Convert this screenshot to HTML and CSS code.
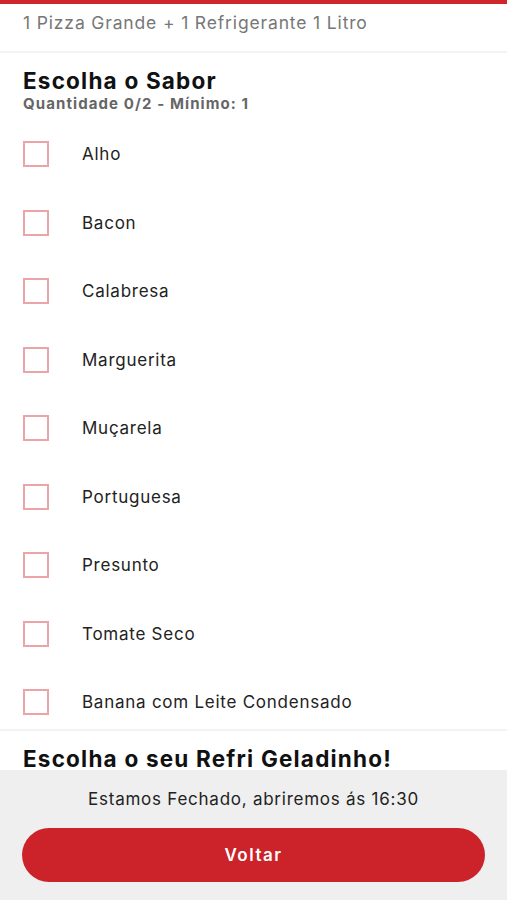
FILE: index.html
```html
<!DOCTYPE html>
<html lang="pt-BR">
<head>
    <meta charset="UTF-8" />
    <meta name="viewport" content="width=device-width, initial-scale=1" />
    <title>Escolha o Sabor</title>
    <link rel="stylesheet" href="styles.css">
</head>
<body>
    <div class="top-bar"></div>

    <p class="product-desc">1 Pizza Grande + 1 Refrigerante 1 Litro</p>

    <section class="group">
        <h2 class="group-title">Escolha o Sabor</h2>
        <p class="group-info">Quantidade 0/2 - Mínimo: 1</p>

        <ul class="options">
            <li class="option"><span class="check"></span>Alho</li>
            <li class="option"><span class="check"></span>Bacon</li>
            <li class="option"><span class="check"></span>Calabresa</li>
            <li class="option"><span class="check"></span>Marguerita</li>
            <li class="option"><span class="check"></span>Muçarela</li>
            <li class="option"><span class="check"></span>Portuguesa</li>
            <li class="option"><span class="check"></span>Presunto</li>
            <li class="option"><span class="check"></span>Tomate Seco</li>
            <li class="option"><span class="check"></span>Banana com Leite Condensado</li>
        </ul>
    </section>

    <section class="group">
        <h2 class="group-title">Escolha o seu Refri Geladinho!</h2>
    </section>

    <footer class="bottom">
        <p class="closed-msg">Estamos Fechado, abriremos ás 16:30</p>
        <button class="back-btn" type="button">Voltar</button>
    </footer>
</body>
</html>
```

FILE: styles.css
```css
body {
    font-family: Inter, "Noto Sans", sans-serif;
    background-color: #ffffff;
    color: #222;
    margin: 0;
    height: 900px;
    overflow: hidden;
}
.top-bar {
    height: 4px;
    background-color: #d0252b; /* brand red */
}
.product-desc {
    margin: 0;
    padding: 8px 23px 18px;
    font-size: 17.5px;
    line-height: 21px;
    letter-spacing: 0.85px;
    color: #777;
    border-bottom: 2px solid #f3f3f3;
}
.group {
    padding: 0 23px;
    border-bottom: 2px solid #f3f3f3;
}
.group-title {
    margin: 0;
    padding-top: 15px;
    font-size: 22.5px;
    line-height: 26px;
    font-weight: 700;
    letter-spacing: 1.2px;
    color: #111;
}
.group-info {
    margin: 0;
    font-size: 15px;
    line-height: 19px;
    font-weight: 700;
    color: #666;
    letter-spacing: 1.1px;
}
.options {
    list-style: none;
    margin: 0 0 -8px;
    padding: 7px 0 0;
}
.option {
    display: flex;
    align-items: center;
    height: 68.5px;
    font-size: 17px;
    letter-spacing: 0.75px;
    color: #222;
}
.check {
    width: 22px;
    height: 22px;
    border: 2px solid #eba5a9; /* faded red */
    margin-right: 33px;
    flex-shrink: 0;
}
.bottom {
    position: fixed;
    left: 0;
    right: 0;
    bottom: 0;
    height: 130px;
    background-color: #efefef;
    padding: 0 22px;
    box-sizing: border-box;
}
.closed-msg {
    margin: 0;
    padding: 19px 0 0;
    text-align: center;
    font-size: 17px;
    line-height: 21px;
    letter-spacing: 0.75px;
    color: #222;
}
.back-btn {
    display: block;
    width: 100%;
    height: 54px;
    margin-top: 18px;
    border: none;
    border-radius: 27px;
    background-color: #cc2229;
    color: #fff;
    font-family: inherit;
    font-size: 17px;
    font-weight: 600;
    letter-spacing: 1.5px;
}
```
